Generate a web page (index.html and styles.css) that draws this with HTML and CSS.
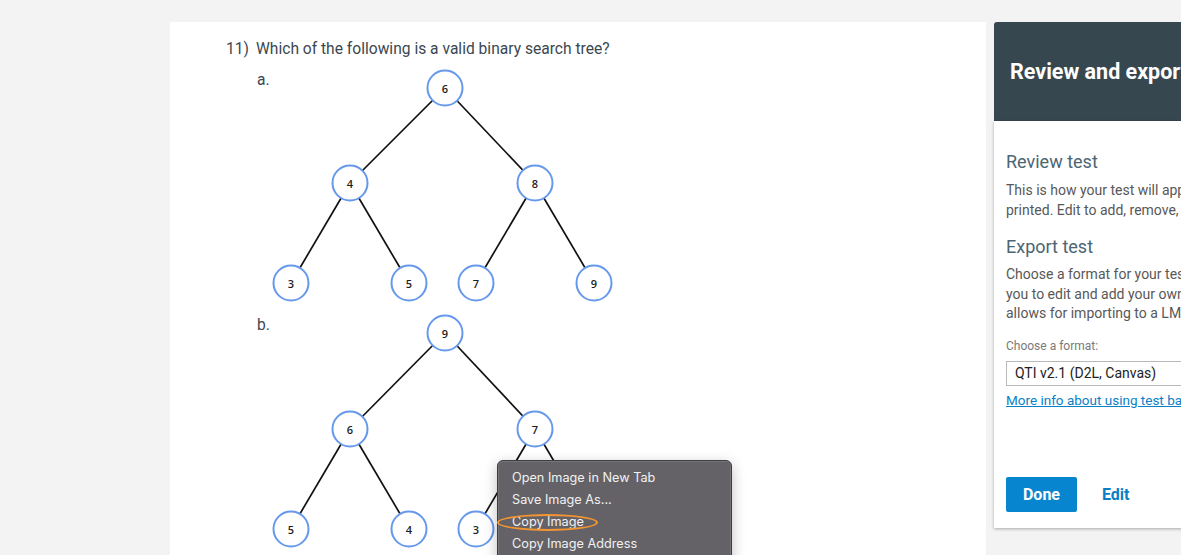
FILE: index.html
```html
<!DOCTYPE html>
<html lang="en">
<head>
<meta charset="utf-8">
<title>Review and export</title>
<link rel="stylesheet" href="styles.css">
</head>
<body>
<div class="page">
  <main class="card">
    <div class="question">
      <span class="qnum">11)</span>
      <span class="qtext">Which of the following is a valid binary search tree?</span>
    </div>
    <div class="options">
      <div class="option">
        <span class="olabel">a.</span>
        <svg class="tree" width="360" height="245" viewBox="0 0 360 245">
          <g class="edges">
            <line x1="175" y1="22" x2="80" y2="117"/>
            <line x1="175" y1="22" x2="265" y2="117"/>
            <line x1="80" y1="117" x2="21" y2="217"/>
            <line x1="80" y1="117" x2="139" y2="217"/>
            <line x1="265" y1="117" x2="206" y2="217"/>
            <line x1="265" y1="117" x2="324" y2="217"/>
          </g>
          <g class="nodes">
            <circle cx="175" cy="22" r="17.5"/><text x="175" y="22">6</text>
            <circle cx="80" cy="117" r="17.5"/><text x="80" y="117">4</text>
            <circle cx="265" cy="117" r="17.5"/><text x="265" y="117">8</text>
            <circle cx="21" cy="217" r="17.5"/><text x="21" y="217">3</text>
            <circle cx="139" cy="217" r="17.5"/><text x="139" y="217">5</text>
            <circle cx="206" cy="217" r="17.5"/><text x="206" y="217">7</text>
            <circle cx="324" cy="217" r="17.5"/><text x="324" y="217">9</text>
          </g>
        </svg>
      </div>
      <div class="option">
        <span class="olabel">b.</span>
        <svg class="tree" width="360" height="245" viewBox="0 0 360 245">
          <g class="edges">
            <line x1="175" y1="22" x2="80" y2="118"/>
            <line x1="175" y1="22" x2="265" y2="118"/>
            <line x1="80" y1="118" x2="21" y2="218"/>
            <line x1="80" y1="118" x2="139" y2="218"/>
            <line x1="265" y1="118" x2="206" y2="218"/>
            <line x1="265" y1="118" x2="324" y2="218"/>
          </g>
          <g class="nodes">
            <circle cx="175" cy="22" r="17.5"/><text x="175" y="22">9</text>
            <circle cx="80" cy="118" r="17.5"/><text x="80" y="118">6</text>
            <circle cx="265" cy="118" r="17.5"/><text x="265" y="118">7</text>
            <circle cx="21" cy="218" r="17.5"/><text x="21" y="218">5</text>
            <circle cx="139" cy="218" r="17.5"/><text x="139" y="218">4</text>
            <circle cx="206" cy="218" r="17.5"/><text x="206" y="218">3</text>
            <circle cx="324" cy="218" r="17.5"/><text x="324" y="218">8</text>
          </g>
        </svg>
      </div>
    </div>

    <div class="ctx-menu">
      <div class="ctx-item">Open Image in New Tab</div>
      <div class="ctx-item">Save Image As...</div>
      <div class="ctx-item ctx-marked">Copy Image<span class="ring"></span></div>
      <div class="ctx-item">Copy Image Address</div>
    </div>
  </main>

  <aside class="panel">
    <header class="panel-head">Review and export</header>
    <div class="panel-body">
      <h2 class="sec-title first">Review test</h2>
      <p class="sec-text">This is how your test will appear when<br>printed. Edit to add, remove, or reorder.</p>
      <h2 class="sec-title">Export test</h2>
      <p class="sec-text tight">Choose a format for your test. Word allows<br>you to edit and add your own questions. QTI<br>allows for importing to a LMS.</p>
      <div class="field-label">Choose a format:</div>
      <div class="select">QTI v2.1 (D2L, Canvas)</div>
      <a class="info-link" href="#">More info about using test banks</a>
      <div class="actions">
        <button class="btn-done">Done</button>
        <button class="btn-edit">Edit</button>
      </div>
    </div>
  </aside>
</div>
</body>
</html>
```

FILE: styles.css
```css
html, body {
  margin: 0;
  padding: 0;
  background: #f3f3f3;
  overflow: hidden;
  height: 555px;
}

.page {
  display: flex;
  align-items: flex-start;
  gap: 8px;
  padding: 22px 0 0 170px;
  width: 1400px;
}

.card {
  position: relative;
  width: 816px;
  height: 560px;
  background: #ffffff;
  padding: 17px 0 0 56px;
  box-sizing: border-box;
  font-family: Roboto, "Liberation Sans", sans-serif;
  color: #3b4751;
}

.question {
  display: flex;
  font-size: 15.6px;
  line-height: 20px;
}

.qnum {
  width: 30px;
}

.options {
  margin: 7px 0 0 31px;
  display: flex;
  flex-direction: column;
}

.option {
  display: flex;
  align-items: flex-start;
}

.olabel {
  width: 13px;
  font-size: 15.6px;
  line-height: 20px;
  margin-top: 4px;
}

.tree {
  display: block;
}

.edges line {
  stroke: #111;
  stroke-width: 1.7;
}

.nodes circle {
  fill: #fff;
  stroke: #6699ec;
  stroke-width: 2;
}

.nodes text {
  font-family: "Open Sans", "DejaVu Sans", sans-serif;
  font-size: 11px;
  font-weight: 600;
  fill: #1d1d1d;
  text-anchor: middle;
  dominant-baseline: central;
}

/* context menu overlay */
.ctx-menu {
  position: absolute;
  left: 327px;
  top: 438px;
  width: 235px;
  height: 110px;
  box-sizing: border-box;
  padding: 6px 0;
  background: #646266;
  border: 1px solid #3d3c3f;
  border-radius: 6px;
  box-shadow: inset 0 0 0 1px rgba(255,255,255,0.12), 0 4px 14px rgba(0,0,0,0.25);
  font-family: Inter, "Noto Sans", sans-serif;
  font-size: 12.7px;
  color: #f1f1f1;
}

.ctx-item {
  position: relative;
  height: 22px;
  line-height: 22px;
  padding-left: 14px;
}

.ring {
  position: absolute;
  left: -1px;
  top: 3px;
  width: 97px;
  height: 13px;
  border: 2.5px solid #f39531;
  border-radius: 50%;
}

/* right panel */
.panel {
  width: 300px;
  flex: none;
  font-family: Roboto, "Liberation Sans", sans-serif;
}

.panel-head {
  height: 99px;
  display: flex;
  align-items: center;
  padding-left: 16px;
  background: #37474f;
  color: #ffffff;
  font-size: 21.5px;
  font-weight: 700;
  border-radius: 3px 3px 0 0;
  white-space: nowrap;
}

.panel-body {
  background: #ffffff;
  padding: 1px 0 16px 12px;
  box-shadow: 0 1px 3px rgba(0,0,0,0.3);
}

.sec-title {
  margin: 16px 0 0;
  font-size: 18px;
  line-height: 22px;
  font-weight: 400;
  color: #4c6573;
}

.sec-title.first {
  margin-top: 29px;
}

.sec-text {
  margin: 7px 0 0;
  font-size: 14px;
  line-height: 20px;
  color: #585858;
  white-space: nowrap;
}

.sec-text.tight {
  margin-top: 7px;
  line-height: 19.5px;
}

.field-label {
  margin-top: 15px;
  font-size: 12px;
  line-height: 14px;
  color: #7a7a7a;
}

.select {
  margin-top: 8px;
  height: 25px;
  box-sizing: border-box;
  border: 1px solid #b9b9b9;
  padding-left: 8px;
  font-size: 14px;
  line-height: 23px;
  color: #222;
}

.info-link {
  display: block;
  margin-top: 6px;
  font-size: 13.5px;
  line-height: 16px;
  color: #0b7fc7;
  text-decoration: underline;
  white-space: nowrap;
}

.actions {
  display: flex;
  align-items: center;
  gap: 25px;
  margin-top: 69px;
}

.btn-done {
  width: 71px;
  height: 35px;
  border: none;
  border-radius: 2px;
  background: #0885cf;
  color: #ffffff;
  font-family: Roboto, "Liberation Sans", sans-serif;
  font-size: 16px;
  font-weight: 700;
  padding: 0;
}

.btn-edit {
  border: none;
  background: none;
  padding: 0;
  color: #0a7fc6;
  font-family: Roboto, "Liberation Sans", sans-serif;
  font-size: 16px;
  font-weight: 700;
}
```
